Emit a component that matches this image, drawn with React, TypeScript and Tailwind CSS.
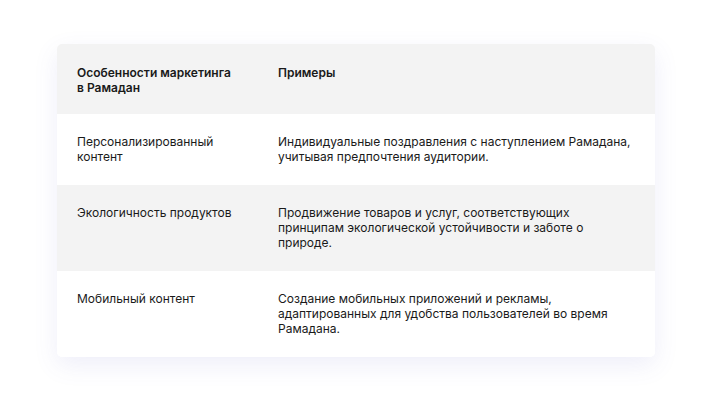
export default function App() {
  const rows = [
    {
      a: "Персонализированный контент",
      b: "Индивидуальные поздравления с наступлением Рамадана, учитывая предпочтения аудитории.",
    },
    {
      a: "Экологичность продуктов",
      b: "Продвижение товаров и услуг, соответствующих принципам экологической устойчивости и заботе о природе.",
    },
    {
      a: "Мобильный контент",
      b: "Создание мобильных приложений и рекламы, адаптированных для удобства пользователей во время Рамадана.",
    },
  ];
  return (
    <div className="w-[713px] h-[401px] bg-white pt-[44px] pl-[57px]" style={{ fontFamily: "Inter, 'Noto Sans', sans-serif" }}>
      <div className="w-[598px] rounded-[5px] overflow-hidden bg-white shadow-[0_8px_24px_rgba(90,90,200,0.10)] text-[12px] leading-[15px] text-[#1a1a1a]">
        <div className="flex bg-[#f3f3f3] font-semibold pt-[21px] pb-[19px]">
          <div className="w-[221px] shrink-0 pl-[20px] pr-[40px]">Особенности маркетинга в Рамадан</div>
          <div className="flex-1 pr-[20px]">Примеры</div>
        </div>
        {rows.map((r, i) => (
          <div key={i} className={`flex pt-[20px] pb-[21px] ${i % 2 === 1 ? "bg-[#f3f3f3]" : "bg-white"}`}>
            <div className="w-[221px] shrink-0 pl-[20px] pr-[40px]">{r.a}</div>
            <div className="flex-1 pr-[20px]">{r.b}</div>
          </div>
        ))}
      </div>
    </div>
  );
}
